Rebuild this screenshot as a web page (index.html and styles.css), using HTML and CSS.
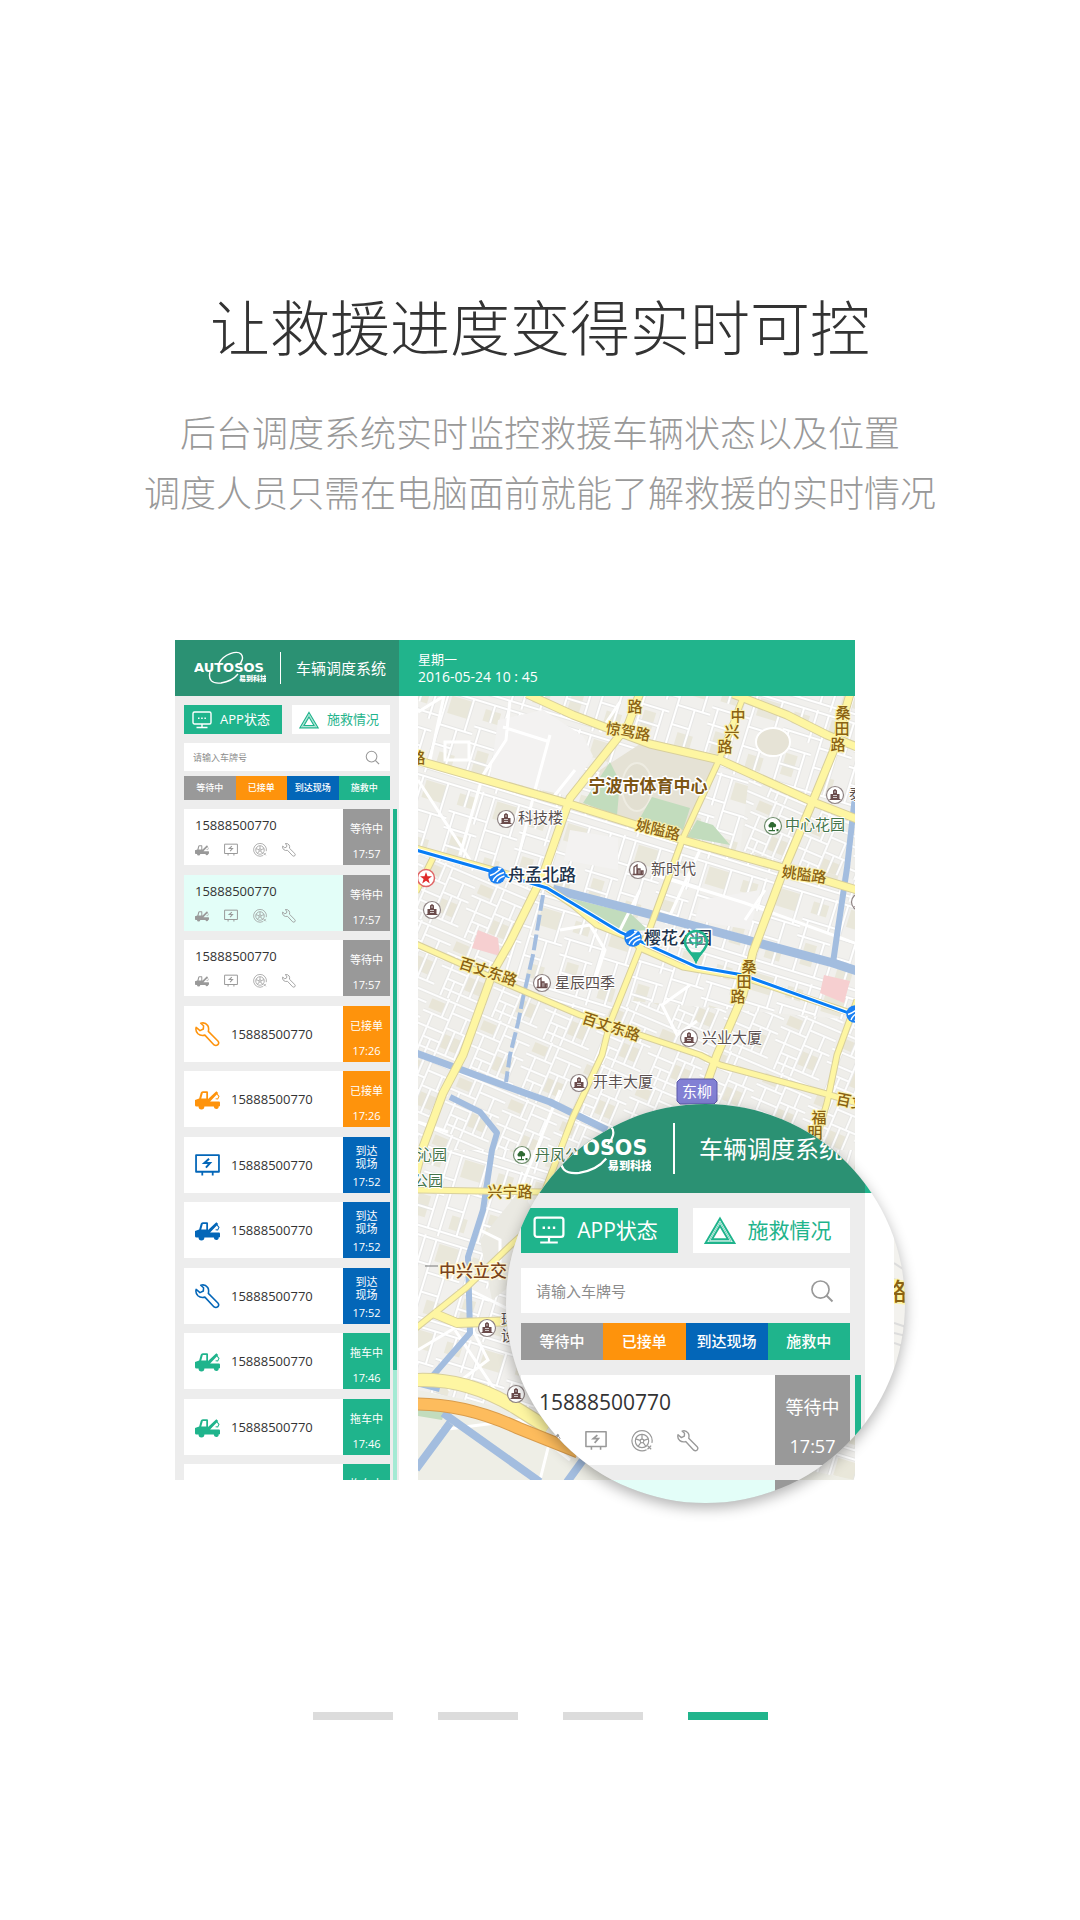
FILE: index.html
```html
<!DOCTYPE html>
<html lang="zh-CN">
<head>
<meta charset="utf-8">
<meta name="viewport" content="width=device-width, initial-scale=1">
<title>车辆调度系统</title>
<link rel="stylesheet" href="styles.css">
</head>
<body>
<svg class="sprite" aria-hidden="true">
  <symbol id="logo" viewBox="0 0 72 34">
    <text class="logo-name" x="0" y="21">AUTOSOS</text>
    <text class="logo-sub" x="45" y="30">易到科技</text>
    <path d="M25 12C30 3 43-1 47 3c3 3 1 8-2 11M16 21c-2 8 2 12 11 11 7-1 13-4 17-9" fill="none" stroke="#fff" stroke-width="1.4"/>
  </symbol>
  <symbol id="monitor" viewBox="0 0 20 18"><path d="M2.500 1h15a1.500 1.500 0 0 1 1.500 1.500v9a1.500 1.500 0 0 1-1.500 1.500h-15A1.500 1.500 0 0 1 1 11.500v-9A1.500 1.500 0 0 1 2.500 1zM10 13v3M4.500 16.500h11" fill="none" stroke="currentColor" stroke-width="1.400"/><path d="M6 6.500h1.500v1.500H6zM9.200 6.500h1.500v1.500H9.200zM12.400 6.500h1.500v1.500h-1.500z" fill="currentColor"/></symbol>
  <symbol id="triangle" viewBox="0 0 20 18"><path d="M10 1.500 19 16.800H1zM10 6l5 8.500H5z" fill="none" stroke="currentColor" stroke-width="1.200"/><path d="M10 3.800 17 15.700H3z" fill="none" stroke="currentColor" stroke-width=".4"/></symbol>
  <symbol id="search" viewBox="0 0 16 16"><circle cx="7" cy="7" r="5.700" fill="none" stroke="currentColor" stroke-width="1.100"/><path d="m11 11 4 4" stroke="currentColor" stroke-width="1.300"/></symbol>
  <symbol id="truck" viewBox="0 0 24 24"><path d="M0 12.500 4 11l1.500-5.500Q6 4 7.500 4h4q1 0 1 1v6.500L20.500 4l1.800 1.800-7.800 8.200H23a1 1 0 0 1 1 1v3.500h-1.200a2.400 2.400 0 0 1-4.800.3h-9a2.800 2.800 0 0 1-5.600 0H1.500Q0 18.800 0 17.500zM6 11h4.800V5.700H7.500z" fill="currentColor" fill-rule="evenodd"/><path d="m21 6.500 2 2.500-1.200 2.500-2-.3" fill="none" stroke="currentColor"/></symbol>
  <symbol id="battery" viewBox="0 0 24 24"><path d="M1 2h22v16H1zM7 18v3.500M17 18v3.500" fill="none" stroke="currentColor" stroke-width="1.700" stroke-linejoin="round"/><path d="m13.500 5.500-4.500 4h5.500L10.500 14" fill="none" stroke="currentColor" stroke-width="1.900"/></symbol>
  <symbol id="tyre" viewBox="0 0 24 24"><g fill="none" stroke="currentColor" stroke-width="1.300"><path d="M17 21.500A11 11 0 1 1 22.800 14"/><circle cx="12" cy="12" r="7.300"/><circle cx="12" cy="12" r="2"/><path d="M12 4.700V10M19 9.700 14 11.300M16.300 18 13.200 13.600M7.700 18l3.100-4.400M5 9.700l5 1.600"/><path d="m18 17 4 4m0-4-4 4"/></g></symbol>
  <symbol id="wrench" viewBox="0 0 24 24"><path d="M5.500 1.200Q9.500-.2 12.200 3.400 13.600 5.600 12.800 9L22 18.200q1.500 1.700 0 3.600-1.900 1.500-3.700.2L9.500 12.600q-4 1-6.700-1.300Q.2 8.800 1.100 5.200L4.800 8.300 8 6.700 8.200 3.600z" fill="none" stroke="currentColor" stroke-width="1.500" stroke-linejoin="round"/></symbol>
  <symbol id="poi-tower" viewBox="0 0 20 20"><circle cx="10" cy="10" r="8.500" fill="#fff" stroke="#8f8484" stroke-width="1.200"/><path d="M8 9V5.500l2-1.500 2 1.500V9h2.500v5h1v1h-11v-1h1V9z" fill="#6b4c4c"/><path d="M8 10.500h4M8 12.500h4M9 7h2" stroke="#fff" stroke-width=".7"/></symbol>
  <symbol id="poi-block" viewBox="0 0 20 20"><circle cx="10" cy="10" r="8.500" fill="#fff" stroke="#8f8484" stroke-width="1.200"/><path d="M6 14V7l3-2v9M10 14V9h2v5M4.500 14.500h11M13.500 14v-3h1.500v3" fill="none" stroke="#6b4c4c" stroke-width="1.300"/></symbol>
  <symbol id="poi-park" viewBox="0 0 20 20"><circle cx="10" cy="10" r="8.500" fill="#fff" stroke="#6f8d6c" stroke-width="1.200"/><path d="M9 11.500H6.500A2 2 0 0 1 6.500 8a2.700 2.700 0 0 1 5-.5 2 2 0 0 1 .5 3.800H10V14h2v1.200H5.500V14H9zM13.500 13h2v2.200h-2z" fill="#2f6b33"/></symbol>
  <symbol id="poi-metro" viewBox="0 0 20 20"><circle cx="10" cy="10" r="8.700" fill="#1b80f2"/><path d="M3 10.500Q8 9 13.500 4M11 3.500l3.500-.3M6 16Q8 10 17 7.500M10 17q1-4 7.500-6" fill="none" stroke="#fff" stroke-width="1.400"/></symbol>
</svg>

<main class="slide">
  <header class="intro">
    <h1>让救援进度变得实时可控</h1>
    <p>后台调度系统实时监控救援车辆状态以及位置<br>调度人员只需在电脑面前就能了解救援的实时情况</p>
  </header>

  <section class="stage">
    <div class="screen">
      <div class="console">
        <header class="brand">
          <svg class="logo" role="img" aria-label="AUTOSOS"><use href="#logo"/></svg>
          <span class="brand-title">车辆调度系统</span>
        </header>
        <div class="panel">
          <div class="tabs">
            <button class="tab tab-on" type="button"><svg><use href="#monitor"/></svg>APP状态</button>
            <button class="tab" type="button"><svg><use href="#triangle"/></svg>施救情况</button>
          </div>
          <label class="search"><input type="text" placeholder="请输入车牌号" aria-label="请输入车牌号"><svg><use href="#search"/></svg></label>
          <div class="filters">
            <button type="button" class="wait">等待中</button><button type="button" class="taken">已接单</button><button type="button" class="onsite">到达现场</button><button type="button" class="towing">施救中</button>
          </div>
          <div class="queue">
            <ul class="cards">
              <li class="card"><div class="job open"><span>15888500770</span><div class="kinds"><svg><use href="#truck"/></svg><svg><use href="#battery"/></svg><svg><use href="#tyre"/></svg><svg><use href="#wrench"/></svg></div></div><div class="state wait"><span>等待中</span><time>17:57</time></div></li>
              <li class="card"><div class="job open current"><span>15888500770</span><div class="kinds"><svg><use href="#truck"/></svg><svg><use href="#battery"/></svg><svg><use href="#tyre"/></svg><svg><use href="#wrench"/></svg></div></div><div class="state wait"><span>等待中</span><time>17:57</time></div></li>
              <li class="card"><div class="job open"><span>15888500770</span><div class="kinds"><svg><use href="#truck"/></svg><svg><use href="#battery"/></svg><svg><use href="#tyre"/></svg><svg><use href="#wrench"/></svg></div></div><div class="state wait"><span>等待中</span><time>17:57</time></div></li>
              <li class="card"><div class="job"><svg class="ink-taken"><use href="#wrench"/></svg><span>15888500770</span></div><div class="state taken"><span>已接单</span><time>17:26</time></div></li>
              <li class="card"><div class="job"><svg class="ink-taken"><use href="#truck"/></svg><span>15888500770</span></div><div class="state taken"><span>已接单</span><time>17:26</time></div></li>
              <li class="card"><div class="job"><svg class="ink-onsite"><use href="#battery"/></svg><span>15888500770</span></div><div class="state onsite"><span>到达<br>现场</span><time>17:52</time></div></li>
              <li class="card"><div class="job"><svg class="ink-onsite"><use href="#truck"/></svg><span>15888500770</span></div><div class="state onsite"><span>到达<br>现场</span><time>17:52</time></div></li>
              <li class="card"><div class="job"><svg class="ink-onsite"><use href="#wrench"/></svg><span>15888500770</span></div><div class="state onsite"><span>到达<br>现场</span><time>17:52</time></div></li>
              <li class="card"><div class="job"><svg class="ink-towing"><use href="#truck"/></svg><span>15888500770</span></div><div class="state towing"><span>拖车中</span><time>17:46</time></div></li>
              <li class="card"><div class="job"><svg class="ink-towing"><use href="#truck"/></svg><span>15888500770</span></div><div class="state towing"><span>拖车中</span><time>17:46</time></div></li>
              <li class="card"><div class="job"></div><div class="state towing"><span>拖车中</span></div></li>
            </ul>
            <div class="track"><div class="thumb"></div></div>
          </div>
        </div>
      </div>

      <div class="view">
        <div class="clock"><span>星期一</span><time>2016-05-24 10 : 45</time></div>
        <svg class="map" viewBox="418 696 437 784" preserveAspectRatio="xMidYMin slice" role="img" aria-label="宁波市地图">
          <defs>
            <pattern id="blocks-a" width="74" height="88" patternUnits="userSpaceOnUse" patternTransform="rotate(17)">
              <path d="M6 8h16v12H6zM44 5h22v18H44zM10 50h12v22H10zM48 62h16v14H48z" fill="#e9e7da"/>
              <path d="M0 2h74M0 28h40M40 36h34M0 45h34M0 81h74M28 0v34M40 2v84M6 28v53M58 36v45M28 45v36M40 56h18M6 62h22M66 2v34M14 2v18" fill="none" stroke="#e3e3e2" stroke-width="3.400"/>
              <path d="M0 2h74M0 28h40M40 36h34M0 45h34M0 81h74M28 0v34M40 2v84M6 28v53M58 36v45M28 45v36M40 56h18M6 62h22M66 2v34M14 2v18" fill="none" stroke="#fff" stroke-width="2"/>
            </pattern>
            <pattern id="blocks-b" width="56" height="62" patternUnits="userSpaceOnUse" patternTransform="rotate(23)">
              <path d="M4 6h14v10H4zM30 34h18v14H30z" fill="#e8e5d7"/>
              <path d="M0 2h56M0 20h28M20 0v20M28 12h28M28 2v60M28 28h28M0 34h28M10 20v42M44 12v16M10 44h18M10 54h46M38 28v26M48 28v26M18 44v18" fill="none" stroke="#e1e1e0" stroke-width="3.200"/>
              <path d="M0 2h56M0 20h28M20 0v20M28 12h28M28 2v60M28 28h28M0 34h28M10 20v42M44 12v16M10 44h18M10 54h46M38 28v26M48 28v26M18 44v18" fill="none" stroke="#fdfdfd" stroke-width="2"/>
            </pattern>
          </defs>
          <path d="M418 696h437v784H418z" fill="#f1f0ed"/>
          <path d="M418 696h437v784H418z" fill="url(#blocks-a)"/>
          <path d="M418 855 540 890 493 978 463 1055 418 1190zM418 945 600 1020 620 1000 855 1020V1150H418zM750 770 855 820V880L740 850z" fill="#efeeea"/>
          <path d="M418 855 540 890 493 978 463 1055 418 1190zM418 945 600 1020 620 1000 855 1020V1150H418zM750 770 855 820V880L740 850z" fill="url(#blocks-b)"/>
          <path d="m498 720 45-10 40 26 10 20-25 40-78-18zM570 830l48 8v32l-54-10zM700 900l60-10-10 40-55-10z" fill="#f3f2f1"/>
          <path d="M418 1390 855 1480H418z" fill="#eeeee6"/>
          <path d="m600 770 40-26 75 18-32 76-90-28z" fill="#e5e2d5"/>
          <path d="m480 1240 40-50 20 30-22 60-26 20z" fill="#eae9e2"/>
          <ellipse cx="637" cy="787" rx="15" ry="24" fill="#e2dfd1" stroke="#eeece2" stroke-width="2"/>
          <ellipse cx="773" cy="742" rx="17" ry="14" fill="#e6e3d6" stroke="#fff" stroke-width="2"/>
          <path d="m610 762 10 20-3 33-34-12zM652 797l38 11-7 22-43-12zM697 820l16 5 17 20-43-8zM557 895l73 18 18 17-28 2zM418 1406l28 2-4 12-24-4z" fill="#c2dcbd"/>
          <path d="m478 930 20 8 2 18-28-8zM824 975l26 6-6 22-24-10z" fill="#f6cfd0"/>
          <g fill="none" stroke="#fff" stroke-width="3">
            <path d="M418 712 444 696 430 760M510 700 506 740 483 775 470 820 460 855M550 735 535 790 520 850M418 780 470 860M445 742h24v18h-24zM503 727l44 14M640 890l-20 40M655 875l90 28 110 40M765 890l-20 30M700 850l-34 74M575 770l-24 30M620 702l-20 30M690 985l-28 20 15 30 20-14M560 930l30-5 15 25-10 30M480 1230l20 10v40M455 1330l40 60M418 1350l50-30 20 40-40 30M440 1430l80-10 50 40M540 1480l10-40 20-20M470 1290l40 20M418 1122l30 10M560 1090l-40 100"/>
          </g>
          <g class="water">
            <path d="m553 889 77 20 87 23 116 31 24 8" stroke-width="9"/>
            <path d="m855 796-8 72-10 67-4 28" stroke-width="6"/>
            <path d="m543 895-10 60-10 43-5 25-8 32-4 27" stroke-width="4" stroke-dasharray="16 4"/>
            <path d="m416 1053 84 31 50 18 57 28" stroke-width="7"/>
            <path d="m450 1097 30 15 17 21-5 17-9 60-15 47 2 76-40 46" stroke-width="6"/>
            <path d="m443 1413 97 69M450 1423l-34 46M583 1460l-16 22M416 1382l24 6" stroke-width="8"/>
          </g>
          <g class="road-edge">
            <path d="m527 694 46 21 34 13 43 16 70 16 93 42 44 17M733 694l54 21 40 20 30 12M416 760l147 42 67 21 53 17 97 27 77 23M641 690l-13 35-58 73-13 37-14 40-33 67-17 30-30 83-20 38-20 54-7 26M850 694l-17 58-23 56-27 64-30 80-10 43-26 60-9 25-8 26" stroke-width="9"/>
            <path d="m745 692-25 66-37 80-33 90-10 20-30 75-8 32-29 62-28 73M416 944l77 34 87 37 45 15 75 25 20 10 103 28 34 10M416 848l124 35 33 22 24 20 33 13 10 10 43 19 60 10 114 38M857 1000l-20 55-10 48-12 40M416 1190l130 2M416 1328l51-41 46-44 20-18M433 858l-17 34" stroke-width="7"/>
            <path d="m433 1313 24 10 60-2" stroke-width="10"/>
            <path d="M416 1380q52-2 100 28l32 20" stroke-width="14"/>
          </g>
          <g class="road">
            <path d="m527 694 46 21 34 13 43 16 70 16 93 42 44 17M733 694l54 21 40 20 30 12M416 760l147 42 67 21 53 17 97 27 77 23M641 690l-13 35-58 73-13 37-14 40-33 67-17 30-30 83-20 38-20 54-7 26M850 694l-17 58-23 56-27 64-30 80-10 43-26 60-9 25-8 26" stroke-width="7"/>
            <path d="m745 692-25 66-37 80-33 90-10 20-30 75-8 32-29 62-28 73M416 944l77 34 87 37 45 15 75 25 20 10 103 28 34 10M416 848l124 35 33 22 24 20 33 13 10 10 43 19 60 10 114 38M857 1000l-20 55-10 48-12 40M416 1190l130 2M416 1328l51-41 46-44 20-18M433 858l-17 34" stroke-width="5"/>
            <path d="m433 1313 24 10 60-2" stroke-width="8"/>
            <path d="M416 1380q52-2 100 28l32 20" stroke-width="12"/>
          </g>
          <path d="M416 1404q50 0 102 24l60 24" fill="none" stroke="#d99c4c" stroke-width="13"/>
          <path d="M416 1404q50 0 102 24l60 24" fill="none" stroke="#fdbc5d" stroke-width="11"/>
          <path d="m416 850 81 23 50 15 73 44 13 6 64 29 46 8 114 41" fill="none" stroke="#fff" stroke-width="5"/>
          <path d="m416 850 81 23 50 15 73 44 13 6 64 29 46 8 114 41" fill="none" stroke="#087df5" stroke-width="3"/>

          <g class="street">
            <text x="635" y="712">路</text><text x="418" y="763">路</text>
            <text x="628" y="737" transform="rotate(10 628 732)">惊驾路</text>
            <text x="738" y="721">中</text><text x="732" y="737">兴</text><text x="725" y="752">路</text>
            <text x="843" y="718">桑</text><text x="842" y="734">田</text><text x="838" y="750">路</text>
            <text x="658" y="835" transform="rotate(14 658 830)">姚隘路</text>
            <text x="804" y="880" transform="rotate(8 804 876)">姚隘路</text>
            <text x="488" y="977" transform="rotate(18 488 972)">百丈东路</text>
            <text x="611" y="1032" transform="rotate(18 611 1027)">百丈东路</text>
            <text x="749" y="972">桑</text><text x="744" y="987">田</text><text x="738" y="1002">路</text>
            <text x="851" y="1107" transform="rotate(12 851 1102)">百丈</text>
            <text x="819" y="1123">福</text><text x="815" y="1138">明</text>
            <text x="510" y="1197">兴宁路</text>
          </g>
          <g class="landmark"><text x="648" y="792">宁波市体育中心</text></g>
          <g class="junction"><text x="473" y="1277">中兴立交</text><path d="M425 1266h13" stroke="#777"/></g>
          <g class="station"><text x="508" y="881">舟孟北路</text><text x="644" y="944">樱花公园</text></g>
          <g class="place">
            <text x="518" y="823">科技楼</text><text x="651" y="874">新时代</text><text x="849" y="799">泰</text>
            <text x="555" y="988">星辰四季</text><text x="702" y="1043">兴业大厦</text><text x="593" y="1087">开丰大厦</text>
            <text x="501" y="1325">环</text><text x="501" y="1341">设</text>
          </g>
          <g class="green"><text x="785" y="830">中心花园</text><text x="417" y="1160">沁园</text><text x="413" y="1186">公园</text><text x="535" y="1160">丹凤公园</text></g>
          <g>
            <use href="#poi-tower" x="496" y="809" width="20" height="20"/><use href="#poi-tower" x="825" y="785" width="20" height="20"/>
            <use href="#poi-tower" x="422" y="900" width="20" height="20"/><use href="#poi-tower" x="679" y="1028" width="20" height="20"/>
            <use href="#poi-tower" x="569" y="1073" width="20" height="20"/><use href="#poi-tower" x="477" y="1318" width="20" height="20"/>
            <use href="#poi-tower" x="506" y="1384" width="20" height="20"/><use href="#poi-tower" x="850" y="892" width="20" height="20"/>
            <use href="#poi-block" x="628" y="860" width="20" height="20"/><use href="#poi-block" x="532" y="973" width="20" height="20"/>
            <use href="#poi-park" x="763" y="816" width="20" height="20"/><use href="#poi-park" x="512" y="1145" width="20" height="20"/>
            <use href="#poi-metro" x="487" y="865" width="20" height="20"/><use href="#poi-metro" x="623" y="928" width="20" height="20"/><use href="#poi-metro" x="845" y="1004" width="20" height="20"/>
          </g>
          <circle cx="426" cy="878" r="8.500" fill="#fff" stroke="#e06666" stroke-width="1.500"/>
          <path d="m426 872 1.500 4.300h4.500l-3.600 2.700 1.400 4.400-3.800-2.700-3.800 2.700 1.400-4.400-3.600-2.700h4.500z" fill="#e02a2a"/>
          <path d="M677 1082l3-3h34l3 3v19l-3 3h-34l-3-3z" fill="#8280d4" stroke="#5a58a8"/>
          <text class="district" x="697" y="1097">东柳</text>
          <path d="M696 961c-3-8-11-11-11-19a11 11 0 0 1 22 0c0 8-8 11-11 19z" fill="#fff" fill-opacity=".35" stroke="#1fb48c" stroke-width="2.500"/>
          <path d="m696 962-5-9h10zM690 938h12M696 934v14M690 943h12M690 938v5M702 938v5" fill="#1fb48c" stroke="#1fb48c" stroke-width="1.300"/>
        </svg>
      </div>
    </div>

    <div class="lens">
      <div class="console">
        <div class="brand">
          <svg class="logo" role="img" aria-label="AUTOSOS"><use href="#logo"/></svg>
          <span class="brand-title">车辆调度系统</span>
        </div>
        <div class="panel">
          <div class="tabs">
            <button class="tab tab-on" type="button"><svg><use href="#monitor"/></svg>APP状态</button>
            <button class="tab" type="button"><svg><use href="#triangle"/></svg>施救情况</button>
          </div>
          <label class="search"><input type="text" placeholder="请输入车牌号" aria-label="请输入车牌号"><svg><use href="#search"/></svg></label>
          <div class="filters">
            <button type="button" class="wait">等待中</button><button type="button" class="taken">已接单</button><button type="button" class="onsite">到达现场</button><button type="button" class="towing">施救中</button>
          </div>
          <div class="queue">
            <ul class="cards">
              <li class="card"><div class="job open"><span>15888500770</span><div class="kinds"><svg><use href="#truck"/></svg><svg><use href="#battery"/></svg><svg><use href="#tyre"/></svg><svg><use href="#wrench"/></svg></div></div><div class="state wait"><span>等待中</span><time>17:57</time></div></li>
              <li class="card"><div class="job open current"></div><div class="state wait"></div></li>
            </ul>
            <div class="track"><div class="thumb"></div></div>
          </div>
        </div>
      </div>
      <div class="view">
        <div class="clock"></div>
        <svg class="map" viewBox="0 0 12 310" preserveAspectRatio="xMinYMin slice" aria-hidden="true">
          <path d="M0 0h12v310H0z" fill="#f3f2ee"/>
          <path d="M0 70l12 8M0 86l12 6M0 130l12 4M0 140l12 3M0 150l12 4" stroke="#dcdcdc" stroke-width="2"/>
          <path d="M0 86 12 88v24L0 110z" fill="#fdf6a0"/>
          <g class="street street-near"><text x="1" y="107">路</text></g>
        </svg>
      </div>
    </div>
  </section>

  <nav class="pager" aria-label="页面">
    <button type="button" aria-label="1"></button><button type="button" aria-label="2"></button><button type="button" aria-label="3"></button><button type="button" class="pager-on" aria-label="4"></button>
  </nav>
</main>
</body>
</html>
```
FILE: styles.css
```css
* { box-sizing: border-box; }

body {
  margin: 0;
  background: #fff;
  color: #333;
  font-family: "Open Sans", "Noto Sans CJK SC", sans-serif;
}

button, input { font: inherit; border: 0; padding: 0; margin: 0; border-radius: 0; }
h1, p, ul { margin: 0; padding: 0; }
ul { list-style: none; }
svg { display: block; flex: none; }
.sprite { position: absolute; width: 0; height: 0; }

.slide {
  display: flex;
  flex-direction: column;
  align-items: center;
  padding: 295px 24px 200px;
}

.intro { text-align: center; font-family: "Noto Sans CJK SC", sans-serif; font-weight: 300; }
.intro h1 { font-size: 60px; line-height: 60px; font-weight: 300; color: #333; }
.intro p { margin-top: 46px; font-size: 36px; line-height: 60px; color: #999; }

.stage {
  position: relative;
  width: 100%;
  max-width: 730px;
  margin-top: 119px;
}

/* Sizes shared by the console and its magnified copy in the lens */
.screen, .lens {
  --bar: 56px;
  --side: 224px;
  --pad: 9px;
  --tab: 29px;
  --find: 28px;
  --find-gap: 5px;
  --filter: 24px;
  --card: 56px;
  --state: 47px;
  --text: 13px;
  --title: 15px;
  --small: 11px;
  --tiny: 9px;
  --icon: 14px;
  --icon-gap: 15px;
  --inset: 11px;
  display: flex;
  overflow: hidden;
  background: #fff;
}

.screen { max-width: 680px; height: 840px; }

.lens {
  --bar: 89px;
  --side: 359px;
  --pad: 15px;
  --tab: 45px;
  --find: 45px;
  --find-gap: 10px;
  --filter: 37px;
  --card: 90px;
  --state: 75px;
  --text: 21px;
  --title: 24px;
  --small: 18px;
  --tiny: 15px;
  --icon: 22px;
  --icon-gap: 24px;
  --inset: 18px;
}

.lens, .stage::after {
  position: absolute;
  left: 331px;
  top: 464px;
  width: 399px;
  height: 399px;
  border-radius: 50%;
}

.stage::after {
  content: "";
  box-shadow: 0 5px 14px rgba(0, 0, 0, .3);
  pointer-events: none;
}

.console { flex: none; width: var(--side); background: #ededed; }

.brand {
  display: flex;
  align-items: center;
  height: var(--bar);
  padding-left: 19px;
  background: #2b9173;
  color: #fff;
  font-size: var(--title);
  white-space: nowrap;
}
.logo { width: 72px; height: 34px; }
.brand-title { margin-left: 14px; padding-left: 15px; border-left: 1px solid #fff; line-height: 32px; }
.lens .brand { padding-left: 30px; }
.lens .logo { width: 115px; height: 54px; }
.lens .brand-title { margin-left: 22px; padding-left: 24px; border-left-width: 2px; line-height: 51px; }
.logo-name { font: bold 13px "DejaVu Sans", sans-serif; fill: #fff; }
.logo-sub { font: 900 7px "Noto Sans CJK SC", sans-serif; fill: #fff; }

.panel { padding: var(--pad); }

.tabs { display: grid; grid-template-columns: 1fr 1fr; gap: 10px; }
.lens .tabs { gap: 15px; }
.tab {
  display: flex;
  align-items: center;
  justify-content: center;
  gap: 8px;
  height: var(--tab);
  padding-right: 4px;
  background: #fff;
  color: #1fb48c;
  font-size: var(--text);
  line-height: var(--tab);
  white-space: nowrap;
}
.tab svg { width: 20px; height: 18px; }
.lens .tab { gap: 12px; padding-right: 8px; }
.lens .tab svg { width: 32px; height: 29px; }
.tab-on { background: #1fb48c; color: #fff; }

.search {
  display: flex;
  align-items: center;
  height: var(--find);
  margin-top: var(--pad);
  padding: 0 10px 0 9px;
  background: #fff;
  color: #999;
}
.search input { flex: 1; min-width: 0; background: none; font-size: var(--tiny); outline: 0; }
.search input::placeholder { color: #8c8c8c; opacity: 1; }
.search svg { width: 15px; height: 15px; }
.lens .search { padding: 0 16px 0 15px; }
.lens .search svg { width: 24px; height: 24px; }

.filters { display: grid; grid-template-columns: repeat(4, 1fr); margin-top: var(--find-gap); }
.filters button {
  height: var(--filter);
  color: #fff;
  font-size: var(--tiny);
  font-weight: 500;
  line-height: var(--filter);
  white-space: nowrap;
}

.wait { background: #999; }
.taken { background: #fe930c; }
.onsite { background: #0366b8; }
.towing { background: #1fb48c; }
.ink-taken { color: #fe930c; }
.ink-onsite { color: #0366b8; }
.ink-towing { color: #1fb48c; }

.queue { display: flex; gap: 3px; margin: var(--pad) -7px 0 0; }
.cards { flex: 1; }
.card { display: flex; height: var(--card); margin-bottom: 9px; }
.card:nth-child(odd) { margin-bottom: 10px; }
.job {
  flex: 1;
  display: flex;
  align-items: center;
  gap: 11px;
  padding-left: var(--inset);
  background: #fff;
  font-size: var(--text);
  line-height: 20px;
}
.job > svg { width: 25px; height: 25px; }
.open { flex-direction: column; align-items: flex-start; justify-content: center; gap: 8px; padding-bottom: 2px; color: #333; }
.current { background: #e3fef8; }
.kinds { display: flex; gap: var(--icon-gap); color: #999; }
.kinds svg { width: var(--icon); height: var(--icon); }
.state {
  display: flex;
  flex-direction: column;
  align-items: center;
  width: var(--state);
  color: #fff;
  font-size: var(--small);
  line-height: 13px;
  text-align: center;
}
.state span { display: grid; place-items: center; height: 39px; }
.state time { line-height: 11px; }

.track { width: 4px; height: 711px; background: #a4ead4; }
.thumb { height: 561px; background: #1fb48c; }

.lens .queue { gap: 5px; margin-right: -11px; }
.lens .card { margin-bottom: 15px; }
.lens .open { gap: 15px; padding-bottom: 0; line-height: 26px; }
.lens .state span { height: 64px; }
.lens .state time { line-height: 14px; }
.lens .track { width: 6px; }

.view { flex: 1; min-width: 0; background: #fff; }
.clock {
  display: flex;
  flex-direction: column;
  justify-content: center;
  height: var(--bar);
  padding-left: 19px;
  background: #21b48c;
  color: #fff;
  font-size: 13px;
  line-height: 18px;
}
.clock time { font-size: 14px; }
.map { width: calc(100% - 19px); height: calc(100% - var(--bar)); margin-left: 19px; }
.lens .map { width: 12px; height: 310px; margin-left: 29px; }

.water { fill: none; stroke: #a3bddf; stroke-linejoin: round; }
.road-edge { fill: none; stroke: #d8cf9c; stroke-linejoin: round; }
.road { fill: none; stroke: #fef6a2; stroke-linejoin: round; }

.map text { font-family: "Noto Sans CJK SC", sans-serif; font-size: 15px; paint-order: stroke; stroke-linejoin: round; }
.street text { fill: #8a6212; stroke: #fdf3a8; stroke-width: 2px; font-weight: 500; text-anchor: middle; }
.map .street-near text { font-size: 24px; }
.map .landmark text { fill: #7c5615; stroke: #fff; stroke-width: 3px; font-size: 17px; font-weight: 700; text-anchor: middle; }
.map .junction text { fill: #7b431b; stroke: #fff8d8; stroke-width: 3px; font-size: 17px; font-weight: 500; text-anchor: middle; }
.map .station text { fill: #20324a; stroke: #fff; stroke-width: 3px; font-size: 17px; font-weight: 500; }
.place text { fill: #5b5150; stroke: #fff; stroke-width: 2px; }
.green text { fill: #44744a; stroke: #fff; stroke-width: 2px; }
.map .district { fill: #fff; text-anchor: middle; }

.pager { display: flex; gap: 45px; margin-top: 232px; }
.pager button { width: 80px; height: 8px; background: #dcdcdc; }
.pager .pager-on { background: #21b48c; }
```
